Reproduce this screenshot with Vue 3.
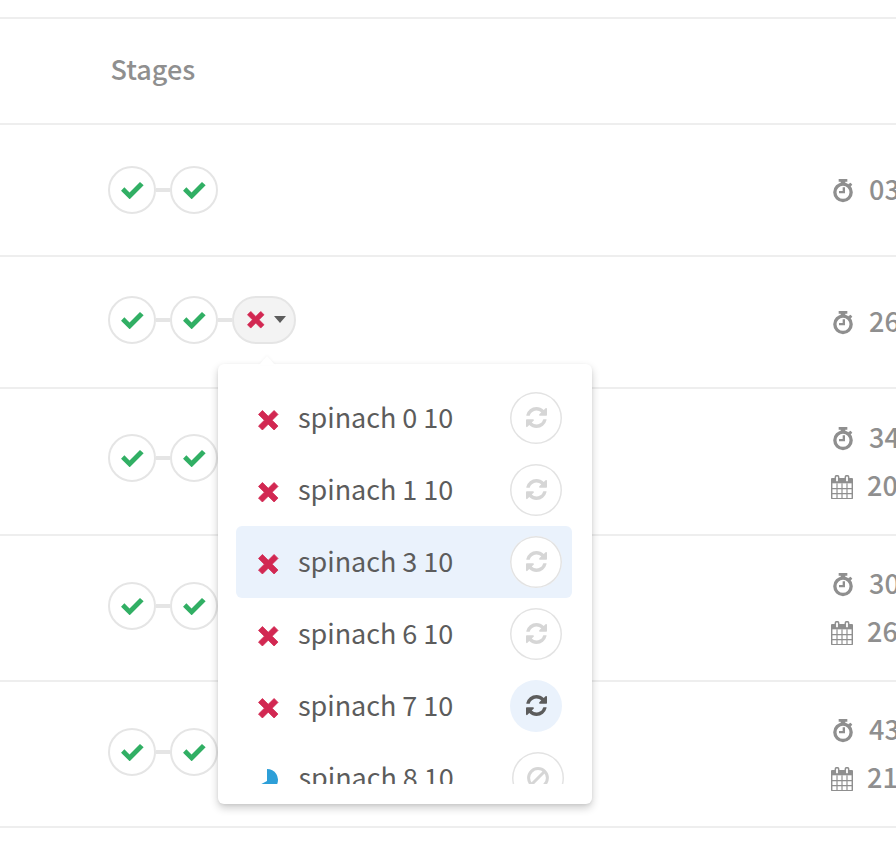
<script setup>
const rows = [
  { kind: 'short first', times: ['03'] },
  { kind: 'short second', open: true, times: ['26'] },
  { kind: 'tall third', times: ['34', '20'] },
  { kind: 'tall fourth', times: ['30', '26'] },
  { kind: 'tall fifth', times: ['43', '21'] },
]
const jobs = [
  { name: 'spinach 0 10', status: 'failed' },
  { name: 'spinach 1 10', status: 'failed' },
  { name: 'spinach 3 10', status: 'failed', state: 'hovered' },
  { name: 'spinach 6 10', status: 'failed' },
  { name: 'spinach 7 10', status: 'failed', state: 'retrying' },
  { name: 'spinach 8 10', status: 'running', state: 'cancelable' },
]
</script>

<template>
  <main class="pipelines">
    <div class="spacer"></div>
    <header class="head">Stages</header>
    <section v-for="row in rows" :key="row.kind" class="row" :class="row.kind">
      <div class="stages">
        <span v-for="n in 2" :key="n" class="stage">
          <svg class="check" viewBox="0 0 68 52"><path d="M0 26 10 16 25.500 31.500 57 0 68 10 26 52Z" /></svg>
        </span>
        <div v-if="row.open" class="stage-menu">
          <button class="stage pill">
            <svg class="cross small" viewBox="0 0 20 20"><path d="M4.300.5 10 6.200 15.700.5 19.500 4.300 13.800 10 19.500 15.700 15.700 19.500 10 13.800 4.300 19.500.5 15.700 6.200 10 .5 4.300Z" /></svg>
            <span class="caret"></span>
          </button>
          <div class="dropdown">
            <ul class="jobs">
              <li v-for="job in jobs" :key="job.name" class="job" :class="job.state">
                <svg v-if="job.status === 'failed'" class="cross" viewBox="0 0 20 20"><path d="M4.300.5 10 6.200 15.700.5 19.500 4.300 13.800 10 19.500 15.700 15.700 19.500 10 13.800 4.300 19.500.5 15.700 6.200 10 .5 4.300Z" /></svg>
                <svg v-else class="pie" viewBox="0 0 22 22"><path d="M10 0A11 11 0 1 1 1.500 18V16.500L10 12Z" /></svg>
                <span class="name">{{ job.name }}</span>
                <button class="action">
                  <svg v-if="job.status === 'failed'" class="refresh" viewBox="128 128 1536 1536"><path d="M1639 1056q0 5-1 7-64 268-268 434.500t-478 166.500q-146 0-282.500-55t-243.500-157l-129 129q-19 19-45 19t-45-19-19-45v-448q0-26 19-45t45-19h448q26 0 45 19t19 45-19 45l-137 137q71 66 161 102t187 36q134 0 250-65t186-179q11-17 53-117 8-23 30-23h192q13 0 22.500 9.500t9.500 22.500zm25-800v448q0 26-19 45t-45 19h-448q-26 0-45-19t-19-45 19-45l138-138q-148-137-349-137-134 0-250 65t-186 179q-11 17-53 117-8 23-30 23h-199q-13 0-22.500-9.500t-9.500-22.500v-7q65-268 270-434.500t480-166.500q146 0 284 55.500t245 156.500l130-129q19-19 45-19t45 19 19 45z" /></svg>
                  <svg v-else class="ban" viewBox="0 0 22 22"><circle cx="11" cy="11" r="9.400" /><path d="M4.500 17.500 17.500 4.500" /></svg>
                </button>
              </li>
            </ul>
          </div>
        </div>
      </div>
      <div class="times">
        <div v-for="(time, i) in row.times" :key="i" class="time" :class="{ date: i === 1 }">
          <svg v-if="i === 0" class="timer" viewBox="0 0 60 70">
            <circle cx="30" cy="40" r="24.500" />
            <path d="M17 0h26v8h-6v7H23V8h-6ZM45 16l8-5 5 6-6 6ZM29 25h7v18H18v-7h11Z" />
          </svg>
          <svg v-else class="calendar" viewBox="0 0 66 73">
            <path class="page" d="M2 24V14q0-3 3-3h56q3 0 3 3v54q0 3-3 3H5q-3 0-3-3Z" />
            <path class="band" d="M1 10h64v15H1Z" />
            <path class="grid" d="M18 25v46M33 25v46M48 25v46M2 41h62M2 56h62" />
            <rect x="13" y="2" width="10" height="19" rx="4" />
            <rect x="43" y="2" width="10" height="19" rx="4" />
          </svg>
          <span class="value">{{ time }}</span>
        </div>
      </div>
    </section>
  </main>
</template>

<style>
body {
  margin: 0;
  background: #fff;
}
</style>

<style scoped>
* {
  box-sizing: border-box;
}
.pipelines {
  width: 896px;
  height: 850px;
  overflow: hidden;
  background: #fff;
  font-family: "Noto Sans CJK SC", "Noto Sans", sans-serif;
  font-size: 27px;
}
svg {
  display: block;
  flex: none;
}
.spacer {
  height: 19px;
  border-bottom: 2px solid #eee;
}
.head {
  height: 106px;
  padding: 0 0 6px 110.500px;
  border-bottom: 2px solid #eee;
  display: flex;
  align-items: center;
  color: #8f8f8f;
  font-weight: 500;
}
.row {
  height: 146px;
  padding-left: 108px;
  border-bottom: 2px solid #eee;
  display: flex;
  justify-content: space-between;
  align-items: flex-start;
}
.short {
  height: 132px;
}
.third {
  height: 147px;
}
.stages {
  display: flex;
  gap: 14px;
  padding-top: 41px;
}
.second .stages {
  padding-top: 39px;
}
.third .stages {
  padding-top: 45px;
}
.fourth .stages,
.fifth .stages {
  padding-top: 46px;
}
.stage {
  position: relative;
  width: 48px;
  height: 48px;
  padding: 0;
  border: 2px solid #e5e5e5;
  border-radius: 24px;
  background: #fff;
  display: flex;
  align-items: center;
  justify-content: center;
}
.stage + .stage::before,
.pill::before {
  content: "";
  position: absolute;
  left: -16px;
  top: 20px;
  width: 14px;
  height: 4px;
  background: #e5e5e5;
}
.check {
  width: 22.700px;
  height: 17.300px;
  margin: 1px 0 0 1px;
  fill: #31af64;
}
.stage-menu {
  position: relative;
}
.pill {
  width: 64px;
  padding-left: 5px;
  background: #f3f3f3;
  gap: 9px;
}
.cross {
  width: 20.500px;
  height: 20.500px;
  fill: #d22852;
  stroke: #d22852;
  stroke-width: 0.800;
  stroke-linejoin: round;
}
.small {
  width: 17.500px;
  height: 17.500px;
}
.caret {
  margin-top: -2px;
  border: 6px solid transparent;
  border-top: 7px solid #5c5c5c;
  border-bottom: 0;
}
.dropdown {
  position: absolute;
  z-index: 2;
  left: -14px;
  top: 68px;
  width: 374px;
  height: 440px;
  padding: 18px 20px 20px 18px;
  border-radius: 6px;
  background: #fff;
  box-shadow: 0 4px 8px rgba(0, 0, 0, 0.200), 0 1px 3px rgba(0, 0, 0, 0.060);
}
.dropdown::before {
  content: "";
  position: absolute;
  left: 41px;
  top: -8px;
  border: 8px solid transparent;
  border-top: 0;
  border-bottom: 9px solid #fff;
  filter: drop-shadow(0 -1px 1px rgba(0, 0, 0, 0.040));
}
.jobs {
  height: 402px;
  margin: 0;
  padding: 0;
  overflow: hidden;
  list-style: none;
}
.job {
  height: 72px;
  padding: 0 10px 0 22px;
  border-radius: 6px;
  display: flex;
  align-items: center;
  color: #5c5c5c;
}
.job .cross {
  margin-top: 4px;
}
.hovered {
  background: #eaf2fc;
}
.name {
  margin: -2px 0 0 19.500px;
  line-height: 40px;
  letter-spacing: -0.050px;
}
.action {
  width: 52px;
  height: 52px;
  margin-left: auto;
  padding: 0;
  border: 0;
  box-shadow: inset 0 0 0 1.500px #e3e3e3;
  border-radius: 50%;
  background: #fff;
  display: flex;
  align-items: center;
  justify-content: center;
  color: #d6d6d6;
}
.refresh {
  width: 21px;
  height: 21px;
  margin-top: -1px;
  fill: currentColor;
}
.retrying .action {
  box-shadow: none;
  background: #eaf2fc;
  color: #5c5c5c;
}
.cancelable {
  padding-right: 8px;
}
.pie {
  width: 22px;
  height: 22px;
  margin: 4px 0 0 -1px;
  fill: #2d9fd8;
}
.ban {
  width: 22px;
  height: 22px;
  fill: none;
  stroke: currentColor;
  stroke-width: 3;
}
.times {
  width: 66px;
  padding-top: 41px;
  color: #8f8f8f;
  font-weight: 500;
}
.tall .times {
  padding-top: 25px;
}
.fourth .times,
.fifth .times {
  padding-top: 24px;
}
.time {
  height: 48px;
  padding-left: 3px;
  display: flex;
  align-items: center;
  white-space: nowrap;
}
.value {
  margin-top: -4px;
}
.timer {
  width: 20px;
  height: 23.300px;
  margin-top: 2px;
  margin-right: 16px;
}
.timer circle {
  fill: none;
  stroke: #8f8f8f;
  stroke-width: 10;
}
.timer path {
  fill: #8f8f8f;
}
.date {
  padding-left: 1px;
}
.calendar {
  width: 22px;
  height: 24.300px;
  margin-top: 2px;
  margin-right: 14px;
  fill: #fff;
  stroke: #8f8f8f;
  stroke-width: 4.500;
}
.calendar .band {
  fill: #8f8f8f;
  stroke: none;
}
.calendar .grid {
  stroke-width: 3.500;
}
</style>
